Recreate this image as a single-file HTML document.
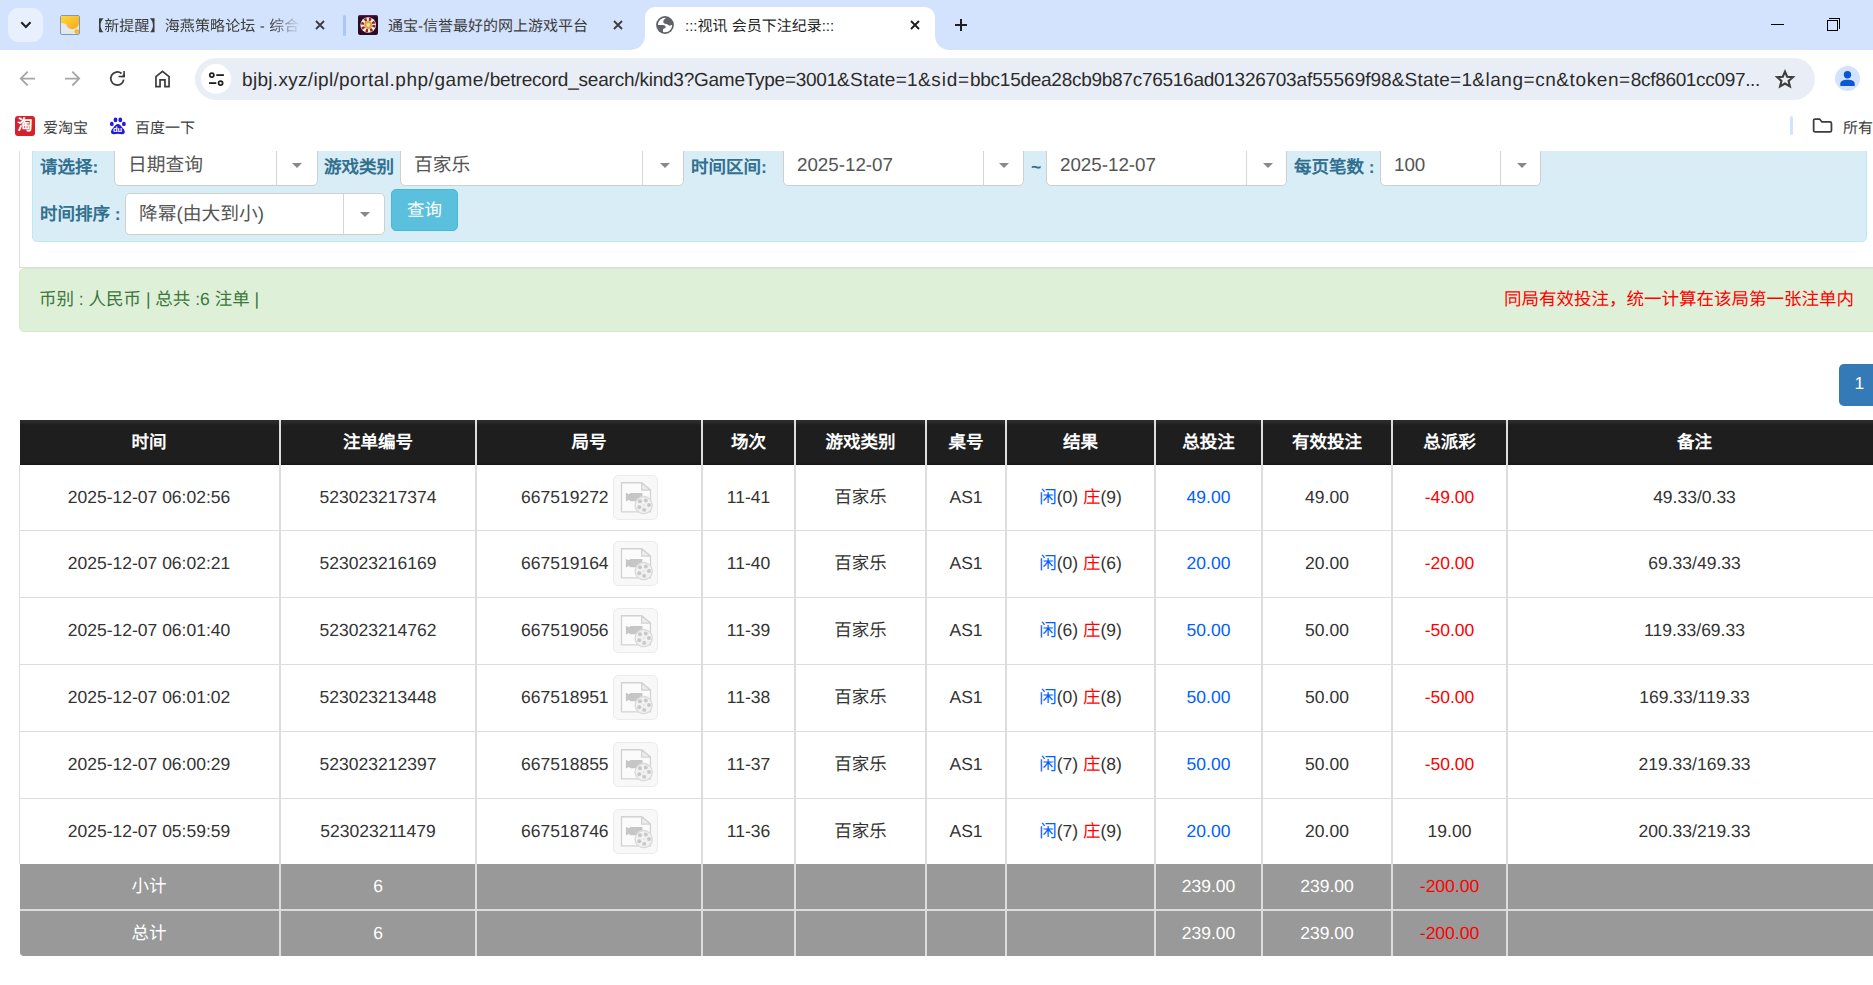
<!DOCTYPE html>
<html lang="zh-CN"><head><meta charset="utf-8"><title>:::视讯 会员下注纪录:::</title>
<style>
*{box-sizing:border-box;margin:0;padding:0}
html,body{width:1873px;height:985px;overflow:hidden;background:#fff;font-family:"Liberation Sans",sans-serif;text-rendering:geometricPrecision}
.a{position:absolute}
#tabs{position:absolute;left:0;top:0;width:1873px;height:50px;background:#d3e3fd}
#toolbar{position:absolute;left:0;top:50px;width:1873px;height:54px;background:#fff}
#bm{position:absolute;left:0;top:104px;width:1873px;height:47px;background:#fff}
#page{position:absolute;left:0;top:151px;width:1873px;height:834px;background:#fff;overflow:hidden}
.tt{position:absolute;top:16px;font-size:15px;line-height:22px;color:#1f1f1f;white-space:nowrap;overflow:hidden}
.ico{position:absolute;overflow:visible}
.lbl{position:absolute;font-weight:bold;color:#31708f;font-size:17.5px;line-height:24px;white-space:nowrap}
.sel{position:absolute;background:#fff;border:1px solid #cfcfcf;border-radius:5px}
.sel .v{position:absolute;left:13px;top:0;font-size:18.75px;color:#555;white-space:nowrap}
.sel .d{position:absolute;top:0;bottom:0;width:1px;background:#d5d5d5}
.sel .ar{position:absolute;width:0;height:0;border-left:5px solid transparent;border-right:5px solid transparent;border-top:5px solid #888}
table{border-collapse:separate;border-spacing:0}
.c{position:absolute;text-align:center;font-size:17.5px;color:#333;white-space:nowrap}
</style></head><body>
<div id="tabs"><div class="a" style="left:8px;top:8px;width:35px;height:34px;border-radius:11px;background:#e8f0fe"></div><svg class="ico" style="left:18px;top:17px" width="16" height="16" viewBox="0 0 16 16"><path d="M3.3 5.3 L7.9 9.9 L12.5 5.3" fill="none" stroke="#1f1f1f" stroke-width="2.1"/></svg><svg class="ico" style="left:60px;top:15px" width="20" height="20" viewBox="0 0 20 20"><defs><linearGradient id="yg" x1="0" y1="0" x2="1" y2="1"><stop offset="0" stop-color="#ffd83a"/><stop offset="1" stop-color="#f5a81c"/></linearGradient></defs><rect x="0.5" y="0.5" width="19" height="19" rx="1.5" fill="#e3e8ef" stroke="#8497b8" stroke-width="1"/><path d="M1 1 H19 V8.5 A6.8 6.8 0 0 1 12.3 14.2 A6.3 6.3 0 0 1 6.2 9 C4 8.6 2.2 8.2 1 7.8 Z" fill="url(#yg)"/><circle cx="16.8" cy="16.6" r="2.4" fill="#f7b71f"/></svg><div class="tt" style="left:89px;width:214px;letter-spacing:0.13px;color:#3c3c3c;-webkit-mask-image:linear-gradient(90deg,#000 182px,transparent 212px)">【新提醒】海燕策略论坛 - 综合</div><svg class="ico" style="left:314px;top:19px" width="12" height="12" viewBox="0 0 12 12"><path d="M2 2 L10 10 M10 2 L2 10" stroke="#3c3c3c" stroke-width="1.8"/></svg><div class="a" style="left:343px;top:15px;width:3px;height:21px;border-radius:2px;background:#a8c7fa"></div><svg class="ico" style="left:358px;top:15px" width="20" height="20" viewBox="0 0 20 20"><rect x="0" y="0" width="20" height="20" rx="2" fill="#2a0b26"/><rect x="1" y="0" width="18" height="1.2" fill="#6a2a6a" opacity="0.7"/><circle cx="10.2" cy="10" r="7.8" fill="#f6efe9"/><circle cx="10.2" cy="10" r="5.7" fill="none" stroke="#a01a24" stroke-width="3" stroke-dasharray="2.24 2.24"/><circle cx="10.2" cy="10" r="3.9" fill="#dba62a"/><circle cx="10.2" cy="10" r="1.9" fill="#e6dcc4"/></svg><div class="tt" style="left:388px;width:220px;color:#3c3c3c">通宝-信誉最好的网上游戏平台</div><svg class="ico" style="left:612px;top:19px" width="12" height="12" viewBox="0 0 12 12"><path d="M2 2 L10 10 M10 2 L2 10" stroke="#3c3c3c" stroke-width="1.8"/></svg><svg class="ico" style="left:629px;top:7px" width="322" height="43" viewBox="0 0 322 43"><path d="M0 43 C10 43 16 37 16 28 V11 C16 4.5 20.5 0 27 0 H295 C301.5 0 306 4.5 306 11 V28 C306 37 312 43 322 43 Z" fill="#fff"/></svg><svg class="ico" style="left:656px;top:16px" width="18" height="18" viewBox="0 0 18 18"><circle cx="9" cy="9" r="8.9" fill="#5f6368"/><path d="M10 1.9 C8 3 7 4.5 7.3 6.3 C7.8 7.8 10 8 11.5 8.5 C12.5 8.9 13 9.8 13.8 9.7 C14.8 9.6 15.5 9 16.1 8.8 A7.15 7.15 0 0 1 7.1 16 C6.8 14.8 6.7 13.5 7.5 12.8 C8.5 12.2 9.8 12 9.7 11 C9.6 9.8 8.2 9.2 7 9.1 L1.9 9 A7.15 7.15 0 0 1 10 1.9 Z" fill="#fff"/></svg><div class="tt" style="left:685px;width:210px;color:#1f1f1f">:::视讯 会员下注纪录:::</div><svg class="ico" style="left:909px;top:19px" width="12" height="12" viewBox="0 0 12 12"><path d="M2 2 L10 10 M10 2 L2 10" stroke="#1f1f1f" stroke-width="1.9"/></svg><svg class="ico" style="left:953px;top:17px" width="16" height="16" viewBox="0 0 16 16"><path d="M8 2 V14 M2 8 H14" stroke="#1f1f1f" stroke-width="2"/></svg><div class="a" style="left:1771px;top:24px;width:13px;height:1.4px;background:#000"></div><div class="a" style="left:1827px;top:20px;width:11px;height:11px;border:1px solid #000"></div><div class="a" style="left:1829px;top:18px;width:11px;height:1px;background:#000"></div><div class="a" style="left:1839px;top:18px;width:1px;height:11px;background:#000"></div></div>
<div id="toolbar"><svg class="ico" style="left:18px;top:19px" width="20" height="20" viewBox="0 0 20 20"><path d="M17 9.6 H3.4 M9.7 2.7 L2.8 9.6 L9.7 16.5" fill="none" stroke="#a6a6a6" stroke-width="1.8"/></svg><svg class="ico" style="left:62px;top:19px" width="20" height="20" viewBox="0 0 20 20"><path d="M3 9.6 H16.6 M10.3 2.7 L17.2 9.6 L10.3 16.5" fill="none" stroke="#a6a6a6" stroke-width="1.8"/></svg><svg class="ico" style="left:108px;top:19px" width="20" height="20" viewBox="0 0 20 20"><path d="M13.5 4.48 A6.55 6.55 0 1 0 15.75 10.64" fill="none" stroke="#3c3c3c" stroke-width="1.75"/><path d="M16.1 1.9 V7.5 H10.5" fill="none" stroke="#3c3c3c" stroke-width="1.6"/><path d="M16.9 4 V8.3 H12.6 Z" fill="#3c3c3c"/></svg><svg class="ico" style="left:153px;top:18px" width="20" height="22" viewBox="0 0 20 22"><path d="M2.95 18.55 V8.6 L9.5 3.3 L16.05 8.6 V18.55 H11.95 V11.95 H7.05 V18.55 Z" fill="none" stroke="#3c3c3c" stroke-width="1.7" stroke-linejoin="miter"/></svg><div class="a" style="left:195px;top:8px;width:1620px;height:42px;border-radius:21px;background:#e9eef6"></div><div class="a" style="left:201px;top:14px;width:30px;height:30px;border-radius:15px;background:#fff"></div><svg class="ico" style="left:208px;top:21px" width="16" height="16" viewBox="0 0 16 16"><circle cx="3.8" cy="4.1" r="2.05" fill="none" stroke="#1f1f1f" stroke-width="1.7"/><path d="M8.3 4.1 H15.9" stroke="#1f1f1f" stroke-width="1.8"/><circle cx="12.6" cy="12.1" r="2.05" fill="none" stroke="#1f1f1f" stroke-width="1.7"/><path d="M1 12.1 H8.3" stroke="#1f1f1f" stroke-width="1.8"/></svg><div class="a" style="left:242px;top:18px;font-size:19px;line-height:26px;color:#2b2b2b;white-space:pre;letter-spacing:0.314px">bjbj.xyz/ipl/</div><div class="a" style="left:339px;top:18px;font-size:19px;line-height:26px;color:#2b2b2b;white-space:pre;letter-spacing:0.509px">portal.php/</div><div class="a" style="left:434.4px;top:18px;font-size:19px;line-height:26px;color:#2b2b2b;white-space:pre;letter-spacing:0.498px">game/</div><div class="a" style="left:489.7px;top:18px;font-size:19px;line-height:26px;color:#2b2b2b;white-space:pre;letter-spacing:-0.197px">betrecord_search/</div><div class="a" style="left:639.5px;top:18px;font-size:19px;line-height:26px;color:#2b2b2b;white-space:pre;letter-spacing:-0.25px">kind3?</div><div class="a" style="left:694px;top:18px;font-size:19px;line-height:26px;color:#2b2b2b;white-space:pre;letter-spacing:-0.254px">GameType=3001</div><div class="a" style="left:837px;top:18px;font-size:19px;line-height:26px;color:#2b2b2b;white-space:pre;letter-spacing:0.275px">&amp;State=1</div><div class="a" style="left:917.9px;top:18px;font-size:19px;line-height:26px;color:#2b2b2b;white-space:pre;letter-spacing:0.808px">&amp;sid=</div><div class="a" style="left:970px;top:18px;font-size:19px;line-height:26px;color:#2b2b2b;white-space:pre;letter-spacing:-0.267px">bbc15dea28cb9b87c76516ad01326703</div><div class="a" style="left:1296.4px;top:18px;font-size:19px;line-height:26px;color:#2b2b2b;white-space:pre;letter-spacing:0.021px">af55569f98</div><div class="a" style="left:1391.7px;top:18px;font-size:19px;line-height:26px;color:#2b2b2b;white-space:pre;letter-spacing:0.225px">&amp;State=1</div><div class="a" style="left:1472.2px;top:18px;font-size:19px;line-height:26px;color:#2b2b2b;white-space:pre;letter-spacing:0.542px">&amp;lang=cn</div><div class="a" style="left:1556.3px;top:18px;font-size:19px;line-height:26px;color:#2b2b2b;white-space:pre;letter-spacing:0.607px">&amp;token=</div><div class="a" style="left:1630.8px;top:18px;font-size:19px;line-height:26px;color:#2b2b2b;white-space:pre;letter-spacing:-0.33px">8cf8601cc097...</div><svg class="ico" style="left:1774px;top:18px" width="22" height="22" viewBox="0 0 22 22"><path d="M11 3.6 L13.2 8.7 L18.9 9.2 L14.6 12.9 L15.9 18.4 L11 15.5 L6.1 18.4 L7.4 12.9 L3.1 9.2 L8.8 8.7 Z" fill="none" stroke="#3c3c3c" stroke-width="2.1" stroke-linejoin="miter"/></svg><div class="a" style="left:1835px;top:16px;width:25px;height:25px;border-radius:13px;background:#d3e3fd"></div><svg class="ico" style="left:1835px;top:16px" width="25" height="25" viewBox="0 0 25 25"><circle cx="12.5" cy="8.7" r="3.7" fill="#0b57d0"/><path d="M5.3 19.9 V17.6 C5.3 15.2 8.3 13.7 12.5 13.7 C16.7 13.7 19.7 15.2 19.7 17.6 V19.9 Z" fill="#0b57d0"/></svg></div>
<div id="bm"><div class="a" style="left:15px;top:12px;width:20px;height:20px;border-radius:3px;background:#d8202a;color:#fff;font-size:15px;line-height:20px;text-align:center;font-weight:bold">淘</div><div class="a" style="left:43px;top:13.5px;font-size:15px;line-height:22px;color:#3c3c3c;white-space:nowrap">爱淘宝</div><svg class="ico" style="left:110px;top:13px" width="17" height="19" viewBox="0 0 17 19"><ellipse cx="1.8" cy="6.9" rx="1.9" ry="2.2" fill="#2319dc"/><ellipse cx="5.5" cy="2.9" rx="1.9" ry="2.4" fill="#2319dc"/><ellipse cx="10.3" cy="2.9" rx="1.9" ry="2.4" fill="#2319dc"/><ellipse cx="13.9" cy="6.9" rx="1.9" ry="2.2" fill="#2319dc"/><path d="M7.9 7.1 C6.2 7.1 5.2 8.6 4 10 C2.6 11.6 1 13 1 15 C1 16.6 2.4 17.3 4 17.2 C5.5 17.1 6.5 16.8 7.9 16.8 C9.3 16.8 10.3 17.1 11.8 17.2 C13.4 17.3 14.8 16.6 14.8 15 C14.8 13 13.2 11.6 11.8 10 C10.6 8.6 9.6 7.1 7.9 7.1 Z" fill="#2319dc"/><text x="7.6" y="15.4" font-size="7.6" font-family="Liberation Sans" fill="#fff" text-anchor="middle" font-weight="bold">du</text></svg><div class="a" style="left:135px;top:13.5px;font-size:15px;line-height:22px;color:#3c3c3c;white-space:nowrap">百度一下</div><div class="a" style="left:1790px;top:12px;width:3px;height:19px;border-radius:2px;background:#d3e3fd"></div><svg class="ico" style="left:1811px;top:12px" width="22" height="20" viewBox="0 0 22 20"><path d="M2.65 4.5 C2.65 3.6 3.2 3.05 4.1 3.05 H8.6 L10.9 5.95 H19 C19.9 5.95 20.45 6.5 20.45 7.4 V14.4 C20.45 15.3 19.9 15.85 19 15.85 H4.1 C3.2 15.85 2.65 15.3 2.65 14.4 Z" fill="none" stroke="#3c3c3c" stroke-width="1.75"/></svg><div class="a" style="left:1843px;top:13.5px;font-size:15px;line-height:22px;color:#3c3c3c;white-space:nowrap">所有书签</div></div>
<div id="page"><div class="a" style="left:19px;top:-10px;width:1900px;height:127px;border-left:1px solid #ddd;border-bottom:1px solid #ddd"></div><div class="a" style="left:32px;top:-20px;width:1835px;height:111px;background:#d9edf7;border:1px solid #bce8f1;border-radius:5px"></div><div class="lbl" style="left:40px;top:3.5px">请选择:</div><div class="sel" style="left:114px;top:-7px;width:204px;height:42px"><div class="v" style="line-height:40px">日期查询</div><div class="d" style="left:161px"></div><div class="ar" style="left:177px;top:18px"></div></div><div class="lbl" style="left:324px;top:3.5px">游戏类别</div><div class="sel" style="left:400px;top:-7px;width:284px;height:42px"><div class="v" style="line-height:40px">百家乐</div><div class="d" style="left:241px"></div><div class="ar" style="left:259px;top:18px"></div></div><div class="lbl" style="left:691px;top:3.5px">时间区间:</div><div class="sel" style="left:783px;top:-7px;width:241px;height:42px"><div class="v" style="line-height:40px">2025-12-07</div><div class="d" style="left:199px"></div><div class="ar" style="left:215px;top:18px"></div></div><div class="lbl" style="left:1031px;top:3.5px;font-weight:bold">~</div><div class="sel" style="left:1046px;top:-7px;width:241px;height:42px"><div class="v" style="line-height:40px">2025-12-07</div><div class="d" style="left:199px"></div><div class="ar" style="left:216px;top:18px"></div></div><div class="lbl" style="left:1294px;top:3.5px">每页笔数 :</div><div class="sel" style="left:1380px;top:-7px;width:161px;height:42px"><div class="v" style="line-height:40px">100</div><div class="d" style="left:119px"></div><div class="ar" style="left:136px;top:18px"></div></div><div class="lbl" style="left:40px;top:51px">时间排序 :</div><div class="sel" style="left:125px;top:42px;width:260px;height:42px"><div class="v" style="line-height:40px">降幂(由大到小)</div><div class="d" style="left:217px"></div><div class="ar" style="left:234px;top:18px"></div></div><div class="a" style="left:391px;top:38px;width:67px;height:42px;background:#5bc0de;border:1px solid #46b8da;border-radius:5px;color:#fff;font-size:17.5px;line-height:40px;text-align:center">查询</div><div class="a" style="left:19px;top:117px;width:1880px;height:64px;background:#dff0d8;border:1px solid #d6e9c6;border-radius:5px"></div><div class="a" style="left:39px;top:136px;font-size:17.5px;line-height:24px;color:#3c763d;white-space:nowrap">币别 : 人民币 | 总共 :6 注单 |</div><div class="a" style="left:1504px;top:136px;width:350px;text-align:right;font-size:17.5px;line-height:24px;color:#f00;white-space:nowrap">同局有效投注，统一计算在该局第一张注单内</div><div class="a" style="left:1839px;top:213px;width:41px;height:42px;background:#337ab7;border-radius:5px 0 0 5px;color:#fff;font-size:17.5px;line-height:39px;padding-left:15.5px">1</div><div class="a" style="left:20px;top:269px;width:1861px;height:45px;background:linear-gradient(#2c2c2c 0px,#2a2a2a 2px,#1e1e1e 5px,#1e1e1e 43px,#141414 45px)"></div><div class="c" style="left:19px;top:269px;width:260px;height:45px;line-height:45px;color:#fff;font-weight:bold">时间</div><div class="c" style="left:280px;top:269px;width:196px;height:45px;line-height:45px;color:#fff;font-weight:bold">注单编号</div><div class="c" style="left:476px;top:269px;width:226px;height:45px;line-height:45px;color:#fff;font-weight:bold">局号</div><div class="c" style="left:702px;top:269px;width:93px;height:45px;line-height:45px;color:#fff;font-weight:bold">场次</div><div class="c" style="left:795px;top:269px;width:131px;height:45px;line-height:45px;color:#fff;font-weight:bold">游戏类别</div><div class="c" style="left:926px;top:269px;width:80px;height:45px;line-height:45px;color:#fff;font-weight:bold">桌号</div><div class="c" style="left:1006px;top:269px;width:149px;height:45px;line-height:45px;color:#fff;font-weight:bold">结果</div><div class="c" style="left:1155px;top:269px;width:107px;height:45px;line-height:45px;color:#fff;font-weight:bold">总投注</div><div class="c" style="left:1262px;top:269px;width:130px;height:45px;line-height:45px;color:#fff;font-weight:bold">有效投注</div><div class="c" style="left:1392px;top:269px;width:115px;height:45px;line-height:45px;color:#fff;font-weight:bold">总派彩</div><div class="c" style="left:1507px;top:269px;width:375px;height:45px;line-height:45px;color:#fff;font-weight:bold">备注</div><div class="a" style="left:279px;top:269px;width:2px;height:536px;background:#ddd"></div><div class="a" style="left:475px;top:269px;width:2px;height:536px;background:#ddd"></div><div class="a" style="left:701px;top:269px;width:2px;height:536px;background:#ddd"></div><div class="a" style="left:794px;top:269px;width:2px;height:536px;background:#ddd"></div><div class="a" style="left:925px;top:269px;width:2px;height:536px;background:#ddd"></div><div class="a" style="left:1005px;top:269px;width:2px;height:536px;background:#ddd"></div><div class="a" style="left:1154px;top:269px;width:2px;height:536px;background:#ddd"></div><div class="a" style="left:1261px;top:269px;width:2px;height:536px;background:#ddd"></div><div class="a" style="left:1391px;top:269px;width:2px;height:536px;background:#ddd"></div><div class="a" style="left:1506px;top:269px;width:2px;height:536px;background:#ddd"></div><div class="a" style="left:19px;top:314px;width:1px;height:399px;background:#ddd"></div><div class="c" style="left:19px;top:314px;width:260px;height:65px;line-height:65px;">2025-12-07 06:02:56</div><div class="c" style="left:280px;top:314px;width:196px;height:65px;line-height:65px;">523023217374</div><div class="a" style="left:521px;top:314px;height:65px;line-height:65px;font-size:17.5px;color:#333;white-space:nowrap">667519272</div><div class="a" style="left:613px;top:324px;width:44px;height:44px"><svg class="ico" width="45" height="45" viewBox="0 0 44 44" style="left:0;top:0"><rect x="0.5" y="0.5" width="43" height="43" rx="5" fill="#f8f8f8" stroke="#ebebeb"/><path d="M8.3 7.6 H28 L36.6 14.8 V36 H8.3 Z" fill="#fbfbfb" stroke="#d2d2d2" stroke-width="1.3"/><path d="M28 7.6 V14.8 H36.6 Z" fill="#ececec" stroke="#d2d2d2" stroke-width="1.2" stroke-linejoin="round"/><path d="M12.6 17.4 L15.4 18.9 L17.2 17.6 H28.8 V25.7 H17.2 L15.4 24.5 L12.6 26 Z" fill="#c6c6c6"/><circle cx="30" cy="29.4" r="8.4" fill="#f1f1f1" stroke="#dadada" stroke-width="1.3"/><circle cx="26.4" cy="25.7" r="1.95" fill="#c8c8c8"/><circle cx="32.1" cy="24.9" r="1.95" fill="#c8c8c8"/><circle cx="35.2" cy="29.4" r="1.95" fill="#c8c8c8"/><circle cx="25.7" cy="31.6" r="1.95" fill="#c8c8c8"/><circle cx="30.5" cy="34.1" r="1.95" fill="#c8c8c8"/><circle cx="30" cy="29.4" r="0.6" fill="#c8c8c8"/></svg></div><div class="c" style="left:702px;top:314px;width:93px;height:65px;line-height:65px;">11-41</div><div class="c" style="left:795px;top:314px;width:131px;height:65px;line-height:65px;">百家乐</div><div class="c" style="left:926px;top:314px;width:80px;height:65px;line-height:65px;">AS1</div><div class="c" style="left:1006px;top:314px;width:149px;height:65px;line-height:65px;"><span style="color:#0060ff">闲</span>(0) <span style="color:#f00">庄</span>(9)</div><div class="c" style="left:1155px;top:314px;width:107px;height:65px;line-height:65px;color:#0060ff">49.00</div><div class="c" style="left:1262px;top:314px;width:130px;height:65px;line-height:65px;">49.00</div><div class="c" style="left:1392px;top:314px;width:115px;height:65px;line-height:65px;color:#f00">-49.00</div><div class="c" style="left:1507px;top:314px;width:375px;height:65px;line-height:65px;">49.33/0.33</div><div class="a" style="left:19px;top:379px;width:1862px;height:1px;background:#ddd"></div><div class="c" style="left:19px;top:379px;width:260px;height:67px;line-height:67px;">2025-12-07 06:02:21</div><div class="c" style="left:280px;top:379px;width:196px;height:67px;line-height:67px;">523023216169</div><div class="a" style="left:521px;top:379px;height:67px;line-height:67px;font-size:17.5px;color:#333;white-space:nowrap">667519164</div><div class="a" style="left:613px;top:390px;width:44px;height:44px"><svg class="ico" width="45" height="45" viewBox="0 0 44 44" style="left:0;top:0"><rect x="0.5" y="0.5" width="43" height="43" rx="5" fill="#f8f8f8" stroke="#ebebeb"/><path d="M8.3 7.6 H28 L36.6 14.8 V36 H8.3 Z" fill="#fbfbfb" stroke="#d2d2d2" stroke-width="1.3"/><path d="M28 7.6 V14.8 H36.6 Z" fill="#ececec" stroke="#d2d2d2" stroke-width="1.2" stroke-linejoin="round"/><path d="M12.6 17.4 L15.4 18.9 L17.2 17.6 H28.8 V25.7 H17.2 L15.4 24.5 L12.6 26 Z" fill="#c6c6c6"/><circle cx="30" cy="29.4" r="8.4" fill="#f1f1f1" stroke="#dadada" stroke-width="1.3"/><circle cx="26.4" cy="25.7" r="1.95" fill="#c8c8c8"/><circle cx="32.1" cy="24.9" r="1.95" fill="#c8c8c8"/><circle cx="35.2" cy="29.4" r="1.95" fill="#c8c8c8"/><circle cx="25.7" cy="31.6" r="1.95" fill="#c8c8c8"/><circle cx="30.5" cy="34.1" r="1.95" fill="#c8c8c8"/><circle cx="30" cy="29.4" r="0.6" fill="#c8c8c8"/></svg></div><div class="c" style="left:702px;top:379px;width:93px;height:67px;line-height:67px;">11-40</div><div class="c" style="left:795px;top:379px;width:131px;height:67px;line-height:67px;">百家乐</div><div class="c" style="left:926px;top:379px;width:80px;height:67px;line-height:67px;">AS1</div><div class="c" style="left:1006px;top:379px;width:149px;height:67px;line-height:67px;"><span style="color:#0060ff">闲</span>(0) <span style="color:#f00">庄</span>(6)</div><div class="c" style="left:1155px;top:379px;width:107px;height:67px;line-height:67px;color:#0060ff">20.00</div><div class="c" style="left:1262px;top:379px;width:130px;height:67px;line-height:67px;">20.00</div><div class="c" style="left:1392px;top:379px;width:115px;height:67px;line-height:67px;color:#f00">-20.00</div><div class="c" style="left:1507px;top:379px;width:375px;height:67px;line-height:67px;">69.33/49.33</div><div class="a" style="left:19px;top:446px;width:1862px;height:1px;background:#ddd"></div><div class="c" style="left:19px;top:446px;width:260px;height:67px;line-height:67px;">2025-12-07 06:01:40</div><div class="c" style="left:280px;top:446px;width:196px;height:67px;line-height:67px;">523023214762</div><div class="a" style="left:521px;top:446px;height:67px;line-height:67px;font-size:17.5px;color:#333;white-space:nowrap">667519056</div><div class="a" style="left:613px;top:457px;width:44px;height:44px"><svg class="ico" width="45" height="45" viewBox="0 0 44 44" style="left:0;top:0"><rect x="0.5" y="0.5" width="43" height="43" rx="5" fill="#f8f8f8" stroke="#ebebeb"/><path d="M8.3 7.6 H28 L36.6 14.8 V36 H8.3 Z" fill="#fbfbfb" stroke="#d2d2d2" stroke-width="1.3"/><path d="M28 7.6 V14.8 H36.6 Z" fill="#ececec" stroke="#d2d2d2" stroke-width="1.2" stroke-linejoin="round"/><path d="M12.6 17.4 L15.4 18.9 L17.2 17.6 H28.8 V25.7 H17.2 L15.4 24.5 L12.6 26 Z" fill="#c6c6c6"/><circle cx="30" cy="29.4" r="8.4" fill="#f1f1f1" stroke="#dadada" stroke-width="1.3"/><circle cx="26.4" cy="25.7" r="1.95" fill="#c8c8c8"/><circle cx="32.1" cy="24.9" r="1.95" fill="#c8c8c8"/><circle cx="35.2" cy="29.4" r="1.95" fill="#c8c8c8"/><circle cx="25.7" cy="31.6" r="1.95" fill="#c8c8c8"/><circle cx="30.5" cy="34.1" r="1.95" fill="#c8c8c8"/><circle cx="30" cy="29.4" r="0.6" fill="#c8c8c8"/></svg></div><div class="c" style="left:702px;top:446px;width:93px;height:67px;line-height:67px;">11-39</div><div class="c" style="left:795px;top:446px;width:131px;height:67px;line-height:67px;">百家乐</div><div class="c" style="left:926px;top:446px;width:80px;height:67px;line-height:67px;">AS1</div><div class="c" style="left:1006px;top:446px;width:149px;height:67px;line-height:67px;"><span style="color:#0060ff">闲</span>(6) <span style="color:#f00">庄</span>(9)</div><div class="c" style="left:1155px;top:446px;width:107px;height:67px;line-height:67px;color:#0060ff">50.00</div><div class="c" style="left:1262px;top:446px;width:130px;height:67px;line-height:67px;">50.00</div><div class="c" style="left:1392px;top:446px;width:115px;height:67px;line-height:67px;color:#f00">-50.00</div><div class="c" style="left:1507px;top:446px;width:375px;height:67px;line-height:67px;">119.33/69.33</div><div class="a" style="left:19px;top:513px;width:1862px;height:1px;background:#ddd"></div><div class="c" style="left:19px;top:513px;width:260px;height:67px;line-height:67px;">2025-12-07 06:01:02</div><div class="c" style="left:280px;top:513px;width:196px;height:67px;line-height:67px;">523023213448</div><div class="a" style="left:521px;top:513px;height:67px;line-height:67px;font-size:17.5px;color:#333;white-space:nowrap">667518951</div><div class="a" style="left:613px;top:524px;width:44px;height:44px"><svg class="ico" width="45" height="45" viewBox="0 0 44 44" style="left:0;top:0"><rect x="0.5" y="0.5" width="43" height="43" rx="5" fill="#f8f8f8" stroke="#ebebeb"/><path d="M8.3 7.6 H28 L36.6 14.8 V36 H8.3 Z" fill="#fbfbfb" stroke="#d2d2d2" stroke-width="1.3"/><path d="M28 7.6 V14.8 H36.6 Z" fill="#ececec" stroke="#d2d2d2" stroke-width="1.2" stroke-linejoin="round"/><path d="M12.6 17.4 L15.4 18.9 L17.2 17.6 H28.8 V25.7 H17.2 L15.4 24.5 L12.6 26 Z" fill="#c6c6c6"/><circle cx="30" cy="29.4" r="8.4" fill="#f1f1f1" stroke="#dadada" stroke-width="1.3"/><circle cx="26.4" cy="25.7" r="1.95" fill="#c8c8c8"/><circle cx="32.1" cy="24.9" r="1.95" fill="#c8c8c8"/><circle cx="35.2" cy="29.4" r="1.95" fill="#c8c8c8"/><circle cx="25.7" cy="31.6" r="1.95" fill="#c8c8c8"/><circle cx="30.5" cy="34.1" r="1.95" fill="#c8c8c8"/><circle cx="30" cy="29.4" r="0.6" fill="#c8c8c8"/></svg></div><div class="c" style="left:702px;top:513px;width:93px;height:67px;line-height:67px;">11-38</div><div class="c" style="left:795px;top:513px;width:131px;height:67px;line-height:67px;">百家乐</div><div class="c" style="left:926px;top:513px;width:80px;height:67px;line-height:67px;">AS1</div><div class="c" style="left:1006px;top:513px;width:149px;height:67px;line-height:67px;"><span style="color:#0060ff">闲</span>(0) <span style="color:#f00">庄</span>(8)</div><div class="c" style="left:1155px;top:513px;width:107px;height:67px;line-height:67px;color:#0060ff">50.00</div><div class="c" style="left:1262px;top:513px;width:130px;height:67px;line-height:67px;">50.00</div><div class="c" style="left:1392px;top:513px;width:115px;height:67px;line-height:67px;color:#f00">-50.00</div><div class="c" style="left:1507px;top:513px;width:375px;height:67px;line-height:67px;">169.33/119.33</div><div class="a" style="left:19px;top:580px;width:1862px;height:1px;background:#ddd"></div><div class="c" style="left:19px;top:580px;width:260px;height:67px;line-height:67px;">2025-12-07 06:00:29</div><div class="c" style="left:280px;top:580px;width:196px;height:67px;line-height:67px;">523023212397</div><div class="a" style="left:521px;top:580px;height:67px;line-height:67px;font-size:17.5px;color:#333;white-space:nowrap">667518855</div><div class="a" style="left:613px;top:591px;width:44px;height:44px"><svg class="ico" width="45" height="45" viewBox="0 0 44 44" style="left:0;top:0"><rect x="0.5" y="0.5" width="43" height="43" rx="5" fill="#f8f8f8" stroke="#ebebeb"/><path d="M8.3 7.6 H28 L36.6 14.8 V36 H8.3 Z" fill="#fbfbfb" stroke="#d2d2d2" stroke-width="1.3"/><path d="M28 7.6 V14.8 H36.6 Z" fill="#ececec" stroke="#d2d2d2" stroke-width="1.2" stroke-linejoin="round"/><path d="M12.6 17.4 L15.4 18.9 L17.2 17.6 H28.8 V25.7 H17.2 L15.4 24.5 L12.6 26 Z" fill="#c6c6c6"/><circle cx="30" cy="29.4" r="8.4" fill="#f1f1f1" stroke="#dadada" stroke-width="1.3"/><circle cx="26.4" cy="25.7" r="1.95" fill="#c8c8c8"/><circle cx="32.1" cy="24.9" r="1.95" fill="#c8c8c8"/><circle cx="35.2" cy="29.4" r="1.95" fill="#c8c8c8"/><circle cx="25.7" cy="31.6" r="1.95" fill="#c8c8c8"/><circle cx="30.5" cy="34.1" r="1.95" fill="#c8c8c8"/><circle cx="30" cy="29.4" r="0.6" fill="#c8c8c8"/></svg></div><div class="c" style="left:702px;top:580px;width:93px;height:67px;line-height:67px;">11-37</div><div class="c" style="left:795px;top:580px;width:131px;height:67px;line-height:67px;">百家乐</div><div class="c" style="left:926px;top:580px;width:80px;height:67px;line-height:67px;">AS1</div><div class="c" style="left:1006px;top:580px;width:149px;height:67px;line-height:67px;"><span style="color:#0060ff">闲</span>(7) <span style="color:#f00">庄</span>(8)</div><div class="c" style="left:1155px;top:580px;width:107px;height:67px;line-height:67px;color:#0060ff">50.00</div><div class="c" style="left:1262px;top:580px;width:130px;height:67px;line-height:67px;">50.00</div><div class="c" style="left:1392px;top:580px;width:115px;height:67px;line-height:67px;color:#f00">-50.00</div><div class="c" style="left:1507px;top:580px;width:375px;height:67px;line-height:67px;">219.33/169.33</div><div class="a" style="left:19px;top:647px;width:1862px;height:1px;background:#ddd"></div><div class="c" style="left:19px;top:647px;width:260px;height:66px;line-height:66px;">2025-12-07 05:59:59</div><div class="c" style="left:280px;top:647px;width:196px;height:66px;line-height:66px;">523023211479</div><div class="a" style="left:521px;top:647px;height:66px;line-height:66px;font-size:17.5px;color:#333;white-space:nowrap">667518746</div><div class="a" style="left:613px;top:658px;width:44px;height:44px"><svg class="ico" width="45" height="45" viewBox="0 0 44 44" style="left:0;top:0"><rect x="0.5" y="0.5" width="43" height="43" rx="5" fill="#f8f8f8" stroke="#ebebeb"/><path d="M8.3 7.6 H28 L36.6 14.8 V36 H8.3 Z" fill="#fbfbfb" stroke="#d2d2d2" stroke-width="1.3"/><path d="M28 7.6 V14.8 H36.6 Z" fill="#ececec" stroke="#d2d2d2" stroke-width="1.2" stroke-linejoin="round"/><path d="M12.6 17.4 L15.4 18.9 L17.2 17.6 H28.8 V25.7 H17.2 L15.4 24.5 L12.6 26 Z" fill="#c6c6c6"/><circle cx="30" cy="29.4" r="8.4" fill="#f1f1f1" stroke="#dadada" stroke-width="1.3"/><circle cx="26.4" cy="25.7" r="1.95" fill="#c8c8c8"/><circle cx="32.1" cy="24.9" r="1.95" fill="#c8c8c8"/><circle cx="35.2" cy="29.4" r="1.95" fill="#c8c8c8"/><circle cx="25.7" cy="31.6" r="1.95" fill="#c8c8c8"/><circle cx="30.5" cy="34.1" r="1.95" fill="#c8c8c8"/><circle cx="30" cy="29.4" r="0.6" fill="#c8c8c8"/></svg></div><div class="c" style="left:702px;top:647px;width:93px;height:66px;line-height:66px;">11-36</div><div class="c" style="left:795px;top:647px;width:131px;height:66px;line-height:66px;">百家乐</div><div class="c" style="left:926px;top:647px;width:80px;height:66px;line-height:66px;">AS1</div><div class="c" style="left:1006px;top:647px;width:149px;height:66px;line-height:66px;"><span style="color:#0060ff">闲</span>(7) <span style="color:#f00">庄</span>(9)</div><div class="c" style="left:1155px;top:647px;width:107px;height:66px;line-height:66px;color:#0060ff">20.00</div><div class="c" style="left:1262px;top:647px;width:130px;height:66px;line-height:66px;">20.00</div><div class="c" style="left:1392px;top:647px;width:115px;height:66px;line-height:66px;">19.00</div><div class="c" style="left:1507px;top:647px;width:375px;height:66px;line-height:66px;">200.33/219.33</div><div class="a" style="left:20px;top:713px;width:1861px;height:45px;background:#999;"></div><div class="c" style="left:19px;top:713px;width:260px;height:45px;line-height:45px;color:#fff;">小计</div><div class="c" style="left:280px;top:713px;width:196px;height:45px;line-height:45px;color:#fff;">6</div><div class="c" style="left:1155px;top:713px;width:107px;height:45px;line-height:45px;color:#fff;">239.00</div><div class="c" style="left:1262px;top:713px;width:130px;height:45px;line-height:45px;color:#fff;">239.00</div><div class="c" style="left:1392px;top:713px;width:115px;height:45px;line-height:45px;color:#fff;color:#f00">-200.00</div><div class="a" style="left:20px;top:759px;width:1861px;height:46px;background:#999;border-radius:0 0 0 4px"></div><div class="c" style="left:19px;top:759px;width:260px;height:46px;line-height:46px;color:#fff;">总计</div><div class="c" style="left:280px;top:759px;width:196px;height:46px;line-height:46px;color:#fff;">6</div><div class="c" style="left:1155px;top:759px;width:107px;height:46px;line-height:46px;color:#fff;">239.00</div><div class="c" style="left:1262px;top:759px;width:130px;height:46px;line-height:46px;color:#fff;">239.00</div><div class="c" style="left:1392px;top:759px;width:115px;height:46px;line-height:46px;color:#fff;color:#f00">-200.00</div><div class="a" style="left:20px;top:758px;width:1861px;height:2px;background:#ddd"></div><div class="a" style="left:279px;top:713px;width:2px;height:92px;background:#ddd"></div><div class="a" style="left:475px;top:713px;width:2px;height:92px;background:#ddd"></div><div class="a" style="left:701px;top:713px;width:2px;height:92px;background:#ddd"></div><div class="a" style="left:794px;top:713px;width:2px;height:92px;background:#ddd"></div><div class="a" style="left:925px;top:713px;width:2px;height:92px;background:#ddd"></div><div class="a" style="left:1005px;top:713px;width:2px;height:92px;background:#ddd"></div><div class="a" style="left:1154px;top:713px;width:2px;height:92px;background:#ddd"></div><div class="a" style="left:1261px;top:713px;width:2px;height:92px;background:#ddd"></div><div class="a" style="left:1391px;top:713px;width:2px;height:92px;background:#ddd"></div><div class="a" style="left:1506px;top:713px;width:2px;height:92px;background:#ddd"></div></div>
</body></html>
